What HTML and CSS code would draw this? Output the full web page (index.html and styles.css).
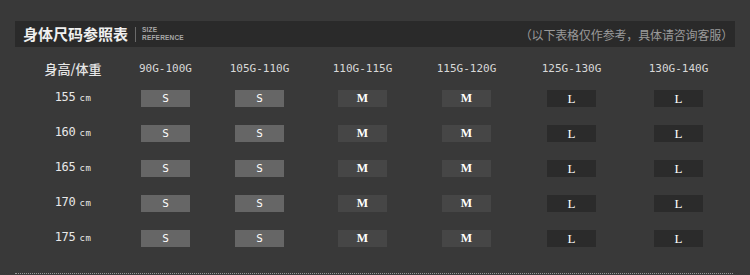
FILE: index.html
```html
<!DOCTYPE html>
<html lang="zh">
<head>
<meta charset="utf-8">
<link rel="stylesheet" href="styles.css">
</head>
<body>
<div class="page">
  <div class="bar">
    <div class="title">身体尺码参照表</div>
    <div class="divider"></div>
    <div class="sub"><span>SIZE</span><span>REFERENCE</span></div>
    <div class="note">（以下表格仅作参考，具体请咨询客服）</div>
  </div>
  <div class="table">
    <div class="row head">
      <div class="cell cn">身高/体重</div>
      <div class="cell">90G-100G</div>
      <div class="cell">105G-110G</div>
      <div class="cell">110G-115G</div>
      <div class="cell">115G-120G</div>
      <div class="cell">125G-130G</div>
      <div class="cell">130G-140G</div>
    </div>
    <div class="row">
      <div class="cell h">155<span class="cm">cm</span></div>
      <div class="cell"><span class="box s">S</span></div>
      <div class="cell"><span class="box s">S</span></div>
      <div class="cell"><span class="box m">M</span></div>
      <div class="cell"><span class="box m">M</span></div>
      <div class="cell"><span class="box l">L</span></div>
      <div class="cell"><span class="box l">L</span></div>
    </div>
    <div class="row">
      <div class="cell h">160<span class="cm">cm</span></div>
      <div class="cell"><span class="box s">S</span></div>
      <div class="cell"><span class="box s">S</span></div>
      <div class="cell"><span class="box m">M</span></div>
      <div class="cell"><span class="box m">M</span></div>
      <div class="cell"><span class="box l">L</span></div>
      <div class="cell"><span class="box l">L</span></div>
    </div>
    <div class="row">
      <div class="cell h">165<span class="cm">cm</span></div>
      <div class="cell"><span class="box s">S</span></div>
      <div class="cell"><span class="box s">S</span></div>
      <div class="cell"><span class="box m">M</span></div>
      <div class="cell"><span class="box m">M</span></div>
      <div class="cell"><span class="box l">L</span></div>
      <div class="cell"><span class="box l">L</span></div>
    </div>
    <div class="row">
      <div class="cell h">170<span class="cm">cm</span></div>
      <div class="cell"><span class="box s">S</span></div>
      <div class="cell"><span class="box s">S</span></div>
      <div class="cell"><span class="box m">M</span></div>
      <div class="cell"><span class="box m">M</span></div>
      <div class="cell"><span class="box l">L</span></div>
      <div class="cell"><span class="box l">L</span></div>
    </div>
    <div class="row">
      <div class="cell h">175<span class="cm">cm</span></div>
      <div class="cell"><span class="box s">S</span></div>
      <div class="cell"><span class="box s">S</span></div>
      <div class="cell"><span class="box m">M</span></div>
      <div class="cell"><span class="box m">M</span></div>
      <div class="cell"><span class="box l">L</span></div>
      <div class="cell"><span class="box l">L</span></div>
    </div>
  </div>
  <div class="rule"></div>
</div>
</body>
</html>
```

FILE: styles.css
```css
html, body {
  margin: 0;
  padding: 0;
  background: #393939;
}
body {
  width: 750px;
  height: 275px;
  overflow: hidden;
  font-family: "DejaVu Sans Mono", "Liberation Mono", monospace;
  color: #e6e6e6;
}
.page {
  padding: 21px 15px 0 15px;
}
.bar {
  width: 720px;
  height: 26px;
  background: #2a2a2a;
  display: flex;
  align-items: center;
}
.title {
  margin-left: 8px;
  font-family: "Noto Sans CJK SC", sans-serif;
  font-size: 15px;
  font-weight: 700;
  color: #f0f0f0;
  line-height: 26px;
}
.divider {
  width: 1px;
  height: 15px;
  background: #6a6a6a;
  margin-left: 7px;
}
.sub {
  margin-left: 6px;
  display: flex;
  flex-direction: column;
  font-family: "Liberation Sans", sans-serif;
  font-weight: 700;
  font-size: 6.5px;
  line-height: 8px;
  letter-spacing: 0.2px;
  color: #a8a8a8;
}
.note {
  margin-left: auto;
  margin-right: 2px;
  font-family: "Noto Sans CJK SC", sans-serif;
  font-size: 12px;
  color: #9a9a9a;
  letter-spacing: -0.15px;
}
.table {
  display: flex;
  flex-direction: column;
  gap: 18px;
  padding-top: 13px;
}
.row {
  display: grid;
  grid-template-columns: 116px 69px 119px 87px 121px 89px 125px;
  height: 17px;
  align-items: center;
}
.head {
  margin-bottom: -6px;
}
.cell {
  text-align: center;
  font-size: 11px;
  line-height: 17px;
  color: #d8d8d8;
}
.cn {
  font-family: "Noto Sans CJK SC", sans-serif;
  font-size: 13px;
  font-weight: 500;
  color: #e6e6e6;
}
.h {
  font-size: 12px;
  letter-spacing: -0.3px;
  color: #e8e8e8;
}
.cm {
  font-size: 9px;
  margin-left: 4px;
  letter-spacing: 0.5px;
}
.box {
  display: inline-block;
  width: 49px;
  height: 17px;
  line-height: 17px;
  vertical-align: top;
  color: #ffffff;
  font-size: 11px;
}
.s { background: #666666; }
.m { background: #464646; font-family: "Liberation Serif", serif; font-weight: 700; font-size: 12px; }
.l { background: #2b2b2b; font-family: "Liberation Serif", serif; font-size: 13px; }
.rule {
  margin-top: 27px;
  width: 718px;
  border-top: 1px dotted #9a9a9a;
}
```
